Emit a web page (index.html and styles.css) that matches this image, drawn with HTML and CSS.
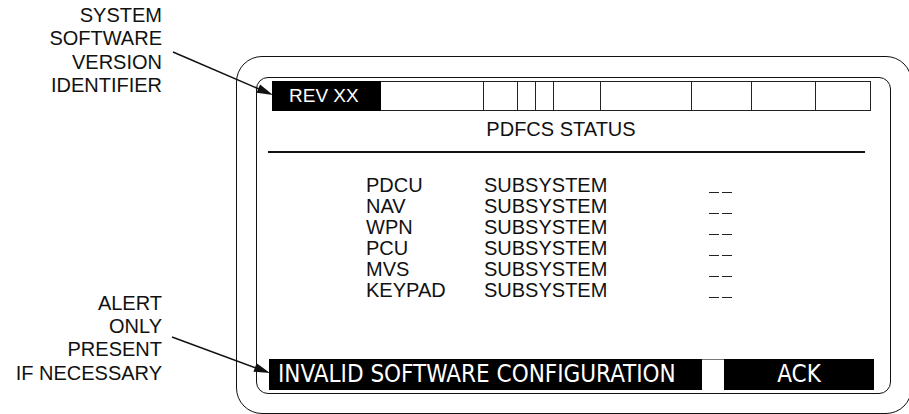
FILE: index.html
```html
<!DOCTYPE html>
<html lang="en">
<head>
<meta charset="UTF-8" />
<meta name="viewport" content="width=device-width, initial-scale=1" />
<title>PDFCS Status</title>
<link rel="stylesheet" href="styles.css">
</head>
<body>

<div class="page">
  <div class="notes">
    <div class="note note-top">SYSTEM<br>SOFTWARE<br>VERSION<br>IDENTIFIER</div>
    <div class="note note-bottom">ALERT<br>ONLY<br>PRESENT<br>IF NECESSARY</div>
  </div>

  <div class="bezel">
    <div class="screen">
      <div class="topbar">
        <div class="cell rev">REV XX</div>
        <div class="cell"></div>
        <div class="cell"></div>
        <div class="cell"></div>
        <div class="cell"></div>
        <div class="cell"></div>
        <div class="cell"></div>
        <div class="cell"></div>
        <div class="cell"></div>
        <div class="cell"></div>
      </div>

      <div class="title">PDFCS STATUS</div>
      <div class="rule"></div>

      <div class="rows">
        <div class="name">PDCU</div><div class="sub">SUBSYSTEM</div><div class="dash"><i></i><i></i></div>
        <div class="name">NAV</div><div class="sub">SUBSYSTEM</div><div class="dash"><i></i><i></i></div>
        <div class="name">WPN</div><div class="sub">SUBSYSTEM</div><div class="dash"><i></i><i></i></div>
        <div class="name">PCU</div><div class="sub">SUBSYSTEM</div><div class="dash"><i></i><i></i></div>
        <div class="name">MVS</div><div class="sub">SUBSYSTEM</div><div class="dash"><i></i><i></i></div>
        <div class="name">KEYPAD</div><div class="sub">SUBSYSTEM</div><div class="dash"><i></i><i></i></div>
      </div>

      <div class="alert">
        <div class="alert-msg">INVALID SOFTWARE CONFIGURATION</div>
        <div class="alert-gap"></div>
        <div class="alert-ack">ACK</div>
      </div>
    </div>
  </div>
</div>

<!-- leader arrows from the notes to the screen -->
<svg class="leaders" width="909" height="414" viewBox="0 0 909 414">
  <line x1="173" y1="52" x2="259" y2="89" />
  <polygon points="273,95 256.5,92.8 260.1,84.6" />
  <line x1="172" y1="337" x2="256" y2="368" />
  <polygon points="270,373 253.4,371.7 256.6,363.3" />
</svg>

</body>
</html>
```

FILE: styles.css
```css
html, body {
  margin: 0;
  padding: 0;
}
body {
  width: 909px;
  height: 414px;
  overflow: hidden;
  position: relative;
  background: #fff;
  color: #111;
  font-family: "Liberation Sans", Arial, sans-serif;
}
.page {
  display: flex;
  align-items: flex-start;
  height: 414px;
}
.notes {
  width: 163px;
  height: 414px;
  box-sizing: border-box;
  padding: 4px 1px 29px 0;
  display: flex;
  flex-direction: column;
  justify-content: space-between;
  flex-shrink: 0;
}
.note {
  text-align: right;
  font-size: 20px;
  line-height: 23.3px;
}
.bezel {
  flex-shrink: 0;
  margin-left: 73px;
  margin-top: 56px;
  width: 676px;
  height: 358px;
  box-sizing: border-box;
  border: 1.5px solid #111;
  border-radius: 26px;
  padding: 19.5px 0 0 18.5px;
}
.screen {
  width: 635px;
  height: 317px;
  box-sizing: border-box;
  border: 1.5px solid #111;
  border-radius: 12px;
  display: flex;
  flex-direction: column;
}
.topbar {
  margin: 3.5px 0 0 15.5px;
  display: grid;
  grid-template-columns: 109px 103px 34px 18px 18px 47px 91px 60px 64px 55px;
  height: 30px;
}
.cell {
  box-sizing: border-box;
  border-top: 1px solid #222;
  border-bottom: 1px solid #222;
  border-right: 1px solid #222;
}
.cell.rev {
  background: #000;
  border-color: #000;
  color: #fff;
  font-size: 19px;
  line-height: 28px;
  padding-left: 17px;
}
.title {
  margin-top: 7px;
  padding-right: 24px;
  text-align: center;
  font-size: 20px;
  line-height: 23px;
}
.rule {
  height: 1.5px;
  background: #111;
  margin: 10px 24.5px 0 11.5px;
}
.rows {
  margin: 22.5px 0 0 109.5px;
  display: grid;
  grid-template-columns: 118px 225px 30px;
  font-size: 20px;
  line-height: 21px;
}
.dash {
  display: flex;
  gap: 3px;
  align-items: flex-end;
  padding-bottom: 3px;
}
.dash i {
  display: block;
  width: 10px;
  height: 1.5px;
  background: #222;
}
.alert {
  margin: auto 15.5px 2.5px 12.5px;
  display: grid;
  grid-template-columns: 433px 1fr 150px;
  height: 31px;
  color: #fff;
  font-family: "DejaVu Sans Condensed", "Liberation Sans Narrow", "DejaVu Sans", sans-serif;
  font-stretch: condensed;
  font-size: 24px;
  line-height: 31px;
}
.alert-msg {
  background: #000;
  padding-left: 9px;
  white-space: nowrap;
}
.alert-gap {
  border-top: 1px solid #777;
}
.alert-ack {
  background: #000;
  text-align: center;
}
.leaders {
  position: absolute;
  left: 0;
  top: 0;
  pointer-events: none;
}
.leaders line {
  stroke: #111;
  stroke-width: 1.5;
}
.leaders polygon {
  fill: #111;
}
```
